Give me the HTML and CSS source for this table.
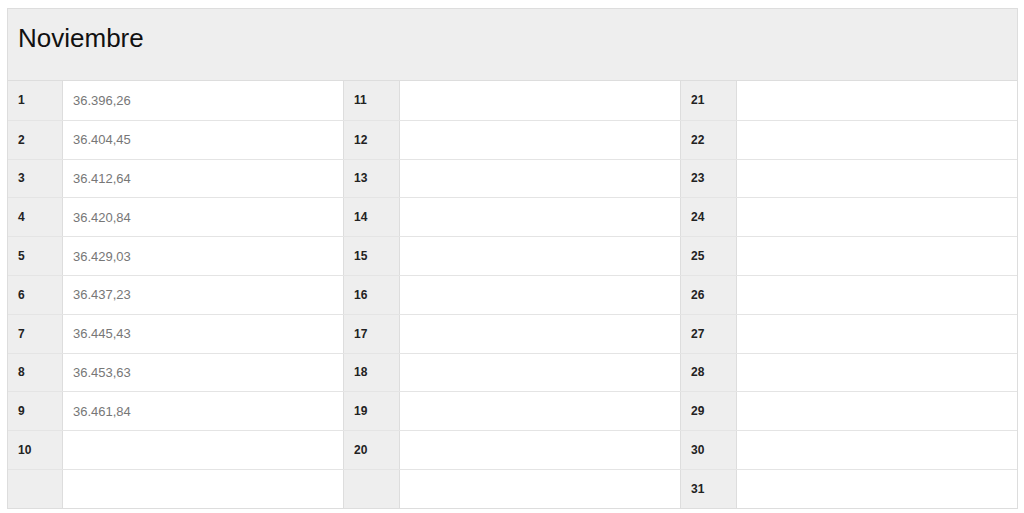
FILE: index.html
```html
<!DOCTYPE html>
<html lang="es">
<head>
<meta charset="utf-8">
<title>Noviembre</title>
<link rel="stylesheet" href="styles.css">
</head>
<body>
<div class="panel">
  <div class="panel-head"><h2 class="title">Noviembre</h2></div>
  <div class="cols">
    <div class="col">
      <div class="row"><div class="num">1</div><div class="val">36.396,26</div></div>
      <div class="row"><div class="num">2</div><div class="val">36.404,45</div></div>
      <div class="row"><div class="num">3</div><div class="val">36.412,64</div></div>
      <div class="row"><div class="num">4</div><div class="val">36.420,84</div></div>
      <div class="row"><div class="num">5</div><div class="val">36.429,03</div></div>
      <div class="row"><div class="num">6</div><div class="val">36.437,23</div></div>
      <div class="row"><div class="num">7</div><div class="val">36.445,43</div></div>
      <div class="row"><div class="num">8</div><div class="val">36.453,63</div></div>
      <div class="row"><div class="num">9</div><div class="val">36.461,84</div></div>
      <div class="row"><div class="num">10</div><div class="val"></div></div>
      <div class="row"><div class="num"></div><div class="val"></div></div>
    </div>
    <div class="col">
      <div class="row"><div class="num">11</div><div class="val"></div></div>
      <div class="row"><div class="num">12</div><div class="val"></div></div>
      <div class="row"><div class="num">13</div><div class="val"></div></div>
      <div class="row"><div class="num">14</div><div class="val"></div></div>
      <div class="row"><div class="num">15</div><div class="val"></div></div>
      <div class="row"><div class="num">16</div><div class="val"></div></div>
      <div class="row"><div class="num">17</div><div class="val"></div></div>
      <div class="row"><div class="num">18</div><div class="val"></div></div>
      <div class="row"><div class="num">19</div><div class="val"></div></div>
      <div class="row"><div class="num">20</div><div class="val"></div></div>
      <div class="row"><div class="num"></div><div class="val"></div></div>
    </div>
    <div class="col">
      <div class="row"><div class="num">21</div><div class="val"></div></div>
      <div class="row"><div class="num">22</div><div class="val"></div></div>
      <div class="row"><div class="num">23</div><div class="val"></div></div>
      <div class="row"><div class="num">24</div><div class="val"></div></div>
      <div class="row"><div class="num">25</div><div class="val"></div></div>
      <div class="row"><div class="num">26</div><div class="val"></div></div>
      <div class="row"><div class="num">27</div><div class="val"></div></div>
      <div class="row"><div class="num">28</div><div class="val"></div></div>
      <div class="row"><div class="num">29</div><div class="val"></div></div>
      <div class="row"><div class="num">30</div><div class="val"></div></div>
      <div class="row"><div class="num">31</div><div class="val"></div></div>
    </div>
  </div>
</div>
</body>
</html>
```
FILE: styles.css
```css
html, body {
  margin: 0;
  padding: 0;
  background: #fff;
}
body {
  padding: 8px 6px 0 7px;
  font-family: "Liberation Sans", Arial, sans-serif;
  color: #333;
}
.panel {
  border: 1px solid #ddd;
  width: 1011px;
  box-sizing: border-box;
}
.panel-head {
  background: #eee;
  height: 72px;
  box-sizing: border-box;
  border-bottom: 1px solid #ddd;
  padding: 14px 10px 0;
}
.title {
  margin: 0;
  font-size: 26px;
  font-weight: normal;
  color: #111;
  line-height: 30px;
}
.cols {
  display: grid;
  grid-template-columns: 335px 337px 1fr;
}
.col {
  display: grid;
  grid-template-rows: repeat(11, 38.8px);
}
.row {
  display: grid;
  grid-template-columns: 55px 1fr;
  border-top: 1px solid #e4e4e4;
}
.row:first-child {
  border-top: none;
}
.col + .col .row {
  grid-template-columns: 57px 1fr;
}
.num {
  background: #eee;
  border-right: 1px solid #ddd;
  font-weight: bold;
  font-size: 12px;
  display: flex;
  align-items: center;
  padding-left: 10px;
  color: #222;
}
.col + .col .num {
  border-left: 1px solid #ddd;
}
.val {
  display: flex;
  align-items: center;
  padding-left: 10px;
  font-size: 13px;
  color: #777;
}
```
